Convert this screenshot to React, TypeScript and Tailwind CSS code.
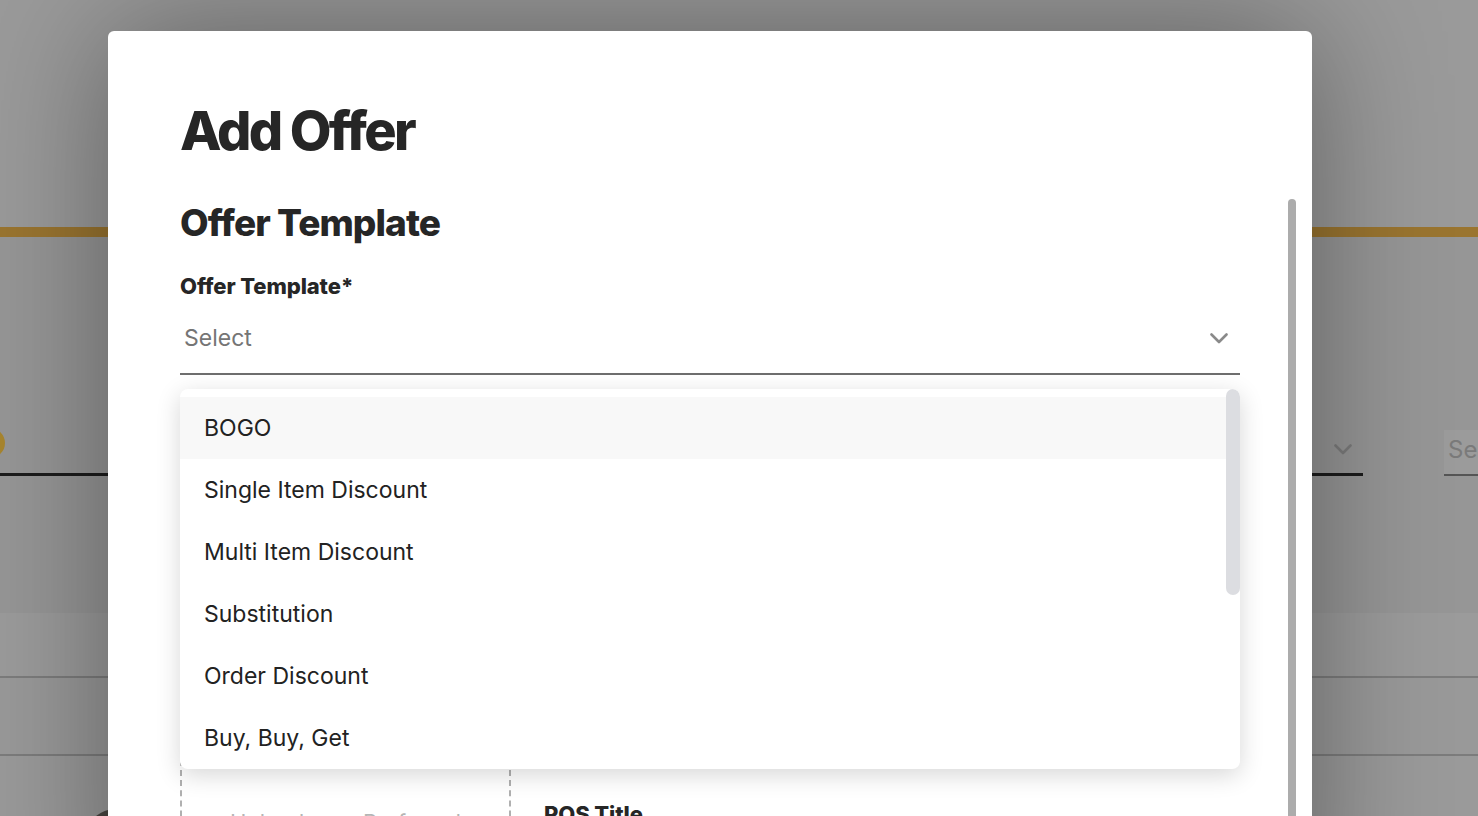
import React from "react";

const items = [
  "BOGO",
  "Single Item Discount",
  "Multi Item Discount",
  "Substitution",
  "Order Discount",
  "Buy, Buy, Get",
  "Buy X Get Y",
];

function Chevron({ className }: { className?: string }) {
  return (
    <svg className={className} width="18" height="11" viewBox="0 0 18 11" fill="none">
      <path d="M1.5 1.5 L9 9 L16.5 1.5" stroke="currentColor" strokeWidth="2.6" strokeLinecap="round" strokeLinejoin="round" />
    </svg>
  );
}

export default function App() {
  return (
    <div className="relative h-[816px] w-[1478px] overflow-hidden bg-[#999999] font-['Inter',sans-serif]">
      {/* Background page (behind overlay) */}
      <div className="h-[227px] bg-[#9a9a9a]" />
      <div className="h-[10px] bg-[#9a7530]" />
      <div className="h-[376px] bg-[#969696] pt-[193px]">
        <div className="flex h-[46px] items-stretch">
          <div className="relative w-[108px] shrink-0 border-b-[3px] border-[#1c1c1c]">
            <div className="absolute left-[-25px] top-[-2px] h-[30px] w-[30px] rounded-full bg-[#a8862e]" />
          </div>
          <div className="w-[1204px] shrink-0" />
          <div className="flex w-[51px] shrink-0 items-center justify-end border-b-[3px] border-[#1c1c1c] pb-[4px] pr-[11px] text-[#7b7b7b]">
            <Chevron />
          </div>
          <div className="w-[81px] shrink-0" />
          <div className="flex min-w-0 flex-1 items-center overflow-hidden whitespace-nowrap border-b-2 border-[#555] bg-[#9b9b9b] pb-[4px] pl-[4px] text-[24px] text-[#7a7a7a]">
            Search
          </div>
        </div>
      </div>
      <div className="h-[63px] bg-[#9b9b9b]" />
      <div className="h-[78px] border-t-2 border-[#7c7c7c] bg-[#999999]" />
      <div className="relative h-[62px] border-t-2 border-[#7c7c7c] bg-[#9a9a9a]">
        <div className="absolute left-[80px] top-[52px] h-[80px] w-[80px] rounded-full bg-[#4a4642]" />
      </div>

      {/* Modal */}
      <div className="absolute left-[108px] top-[31px] h-[900px] w-[1204px] rounded-t-[6px] bg-white shadow-[0_0_130px_rgba(0,0,0,0.38)]">
        <div className="absolute right-[16px] top-[168px] h-[720px] w-[8px] rounded-full bg-[#acacac]" />
        <div className="px-[72px] pt-[73px]">
          <h1 className="text-[54px] font-extrabold leading-none tracking-[-0.05em] text-[#262626]">Add Offer</h1>
          <h2 className="mt-[46px] text-[37px] font-extrabold leading-none tracking-[-0.025em] text-[#262626]">Offer Template</h2>
          <div className="mt-[34px] text-[22px] font-extrabold leading-none tracking-[-0.005em] text-[#262626]">Offer Template*</div>
          <div className="flex items-center justify-between border-b-2 border-[#6e6e6e] pb-[24px] pl-[4px] pr-[12px] pt-[30px]">
            <span className="text-[23px] leading-[22px] text-[#757575]">Select</span>
            <Chevron className="text-[#8a8a8a]" />
          </div>
          <div className="mt-[324px] flex">
            <div className="h-[300px] w-[331px] shrink-0 border-2 border-dashed border-[#b0b0b0] pt-[110px] text-center text-[22px] leading-[22px] text-[#b5b5b5]">
              Upload your Preferred
            </div>
            <div className="ml-[33px] pt-[104px] text-[22px] font-extrabold leading-[22px] tracking-[-0.005em] text-[#262626]">
              POS Title
            </div>
          </div>
        </div>

        {/* Dropdown menu */}
        <div className="absolute left-[72px] top-[358px] h-[380px] w-[1060px] overflow-hidden rounded-[8px] bg-white shadow-[0_6px_24px_rgba(0,0,0,0.16)]">
          <div className="flex">
            <div className="flex-1 pt-[8px]">
              {items.map((it, i) => (
                <div
                  key={it}
                  className={`flex h-[62px] items-center px-[24px] text-[23px] leading-[22px] text-[#222222] ${i === 0 ? "bg-[#f8f8f8]" : ""}`}
                >
                  {it}
                </div>
              ))}
            </div>
            <div className="w-[14px] shrink-0">
              <div className="h-[206px] w-[14px] rounded-full bg-[#dcdde1]" />
            </div>
          </div>
        </div>
      </div>
    </div>
  );
}
